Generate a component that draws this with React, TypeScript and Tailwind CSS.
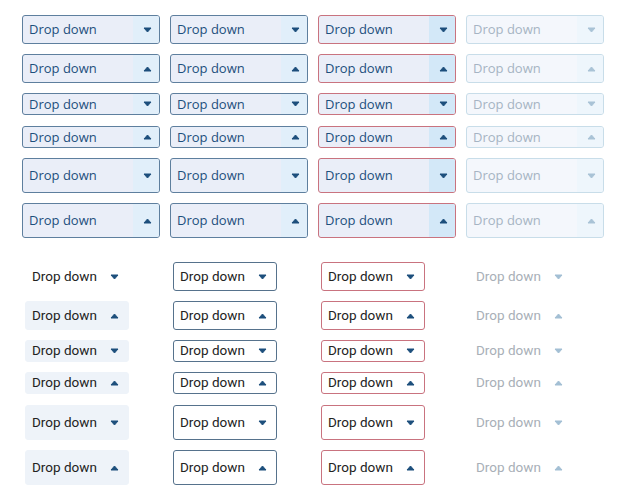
import React from "react";

type Variant = "normal" | "error" | "disabled";

const Arrow = ({ up, color }: { up: boolean; color: string }) => (
  <svg width="9" height="6" viewBox="0 0 9 6" className="block">
    {up ? (
      <path d="M1 5 L8 5 L4.5 1 Z" fill={color} stroke={color} strokeWidth="1" strokeLinejoin="round" />
    ) : (
      <path d="M1 1 L8 1 L4.5 5 Z" fill={color} stroke={color} strokeWidth="1" strokeLinejoin="round" />
    )}
  </svg>
);

const heights = ["h-[29px]", "h-[29px]", "h-[22px]", "h-[22px]", "h-[35px]", "h-[35px]"];
const topGaps = ["", "mt-[10px]", "mt-[10px]", "mt-[11px]", "mt-[10px]", "mt-[10px]"];
const botGaps = ["", "mt-[10px]", "mt-[10px]", "mt-[10px]", "mt-[11px]", "mt-[10px]"];

function TopBox({ v, h, up }: { v: Variant; h: string; up: boolean }) {
  const box =
    v === "normal"
      ? "border-[#5e7f9e] bg-[#eaeef8] text-[#1d4f7c]"
      : v === "error"
      ? "border-[#c9737f] bg-[#eaeef8] text-[#1d4f7c]"
      : "border-[#c8dde9] bg-[#f4f7fc] text-[#a6b4c3]";
  const arrowBg =
    v === "normal" ? "bg-[#e1effa]" : v === "error" ? "bg-[#d3e8f8]" : "bg-[#eef6fc]";
  const ac = v === "disabled" ? "#a9c3d6" : "#1d4f7c";
  return (
    <div className={`w-[138px] ${h} border rounded-[3px] flex overflow-hidden ${box}`}>
      <div
        className="flex-1 flex items-center pl-[6px] text-[13px] leading-none"
        style={{ fontFamily: "'Open Sans', 'Noto Sans', sans-serif" }}
      >
        Drop down
      </div>
      <div className={`w-[26px] flex items-center justify-center pl-[2px] ${arrowBg}`}>
        <Arrow up={up} color={ac} />
      </div>
    </div>
  );
}

function BottomBox({ col, h, up, first }: { col: number; h: string; up: boolean; first: boolean }) {
  let cls = "";
  let ac = "#1d4f7c";
  if (col === 0) cls = first ? "border border-transparent text-[#222222]" : "border border-[#eef3f9] bg-[#eef3f9] text-[#222222]";
  else if (col === 1) cls = "border border-[#56728c] bg-white text-[#222222]";
  else if (col === 2) cls = "border border-[#c9737f] bg-white text-[#222222]";
  else {
    cls = "border border-transparent text-[#a8afb7]";
    ac = "#a3bfd4";
  }
  return (
    <div className="w-[138px] pl-[3px]">
      <div className={`w-[104px] ${h} rounded-[3px] flex items-center justify-between pl-[6px] pr-[9px] ${cls}`}>
        <span className="text-[13.5px] leading-none">Drop down</span>
        <Arrow up={up} color={ac} />
      </div>
    </div>
  );
}

export default function App() {
  const variants: Variant[] = ["normal", "normal", "error", "disabled"];
  return (
    <div
      className="w-[626px] h-[501px] bg-white pl-[22px] pt-[15px]"
      style={{ fontFamily: "Roboto, 'Liberation Sans', sans-serif" }}
    >
      <div className="flex flex-col">
        {heights.map((h, r) => (
          <div key={r} className={`flex gap-[10px] ${topGaps[r]}`}>
            {variants.map((v, c) => (
              <TopBox key={c} v={v} h={h} up={r % 2 === 1} />
            ))}
          </div>
        ))}
      </div>
      <div className="flex flex-col mt-[24px]">
        {heights.map((h, r) => (
          <div key={r} className={`flex gap-[10px] ${botGaps[r]}`}>
            {variants.map((_, c) => (
              <BottomBox key={c} col={c} h={h} up={r % 2 === 1} first={r === 0} />
            ))}
          </div>
        ))}
      </div>
    </div>
  );
}
